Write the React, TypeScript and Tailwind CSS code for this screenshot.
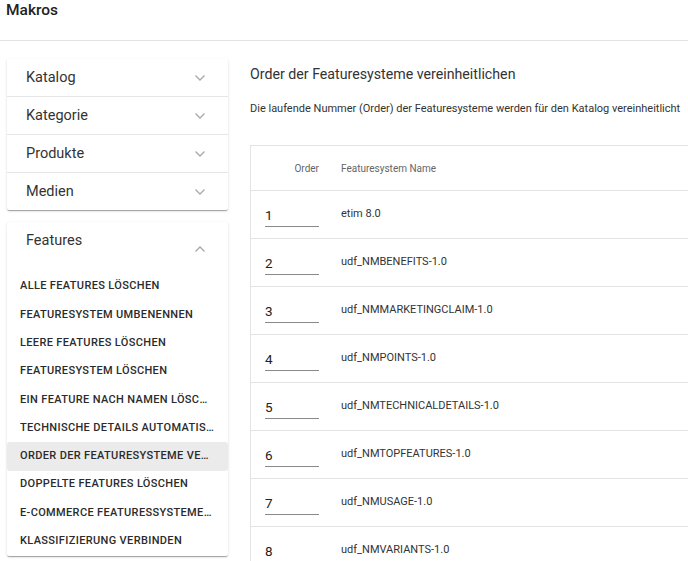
import React from "react";

const Chevron = ({ up = false }: { up?: boolean }) => (
  <svg width="12" height="8" viewBox="0 0 12 8" className="shrink-0">
    <polyline
      points={up ? "1.5,6.5 6,2 10.5,6.5" : "1.5,1.5 6,6 10.5,1.5"}
      fill="none"
      stroke="#a8a8a8"
      strokeWidth="1.3"
    />
  </svg>
);

const sections = ["Katalog", "Kategorie", "Produkte", "Medien"];
const items = [
  "ALLE FEATURES LÖSCHEN",
  "FEATURESYSTEM UMBENENNEN",
  "LEERE FEATURES LÖSCHEN",
  "FEATURESYSTEM LÖSCHEN",
  "EIN FEATURE NACH NAMEN LÖSCHEN",
  "TECHNISCHE DETAILS AUTOMATISCH ERSTELLEN",
  "ORDER DER FEATURESYSTEME VEREINHEITLICHEN",
  "DOPPELTE FEATURES LÖSCHEN",
  "E-COMMERCE FEATURESSYSTEME ERSTELLEN",
  "KLASSIFIZIERUNG VERBINDEN",
];
const rows = [
  "etim 8.0",
  "udf_NMBENEFITS-1.0",
  "udf_NMMARKETINGCLAIM-1.0",
  "udf_NMPOINTS-1.0",
  "udf_NMTECHNICALDETAILS-1.0",
  "udf_NMTOPFEATURES-1.0",
  "udf_NMUSAGE-1.0",
  "udf_NMVARIANTS-1.0",
];

const shadow =
  "shadow-[0_2px_1px_-1px_rgba(0,0,0,0.2),0_1px_1px_0_rgba(0,0,0,0.14),0_1px_3px_0_rgba(0,0,0,0.12)]";

export default function App() {
  return (
    <div
      className="w-[688px] h-[561px] overflow-hidden bg-white text-[#333]"
      style={{ fontFamily: "Roboto, 'Noto Sans', sans-serif" }}
    >
      <div className="h-[41px] border-b border-[#e3e3e3] px-[6px] pt-[1px]">
        <div className="text-[15.5px] font-medium leading-[18px] text-[#222]">Makros</div>
      </div>

      <div className="flex pl-[7px] gap-[22px]">
        {/* Left column */}
        <div className="w-[221px] shrink-0 pt-[18px] flex flex-col gap-[12px]">
          <div className={`bg-white rounded-[2px] ${shadow}`}>
            {sections.map((s, i) => (
              <div
                key={s}
                className={`flex items-center justify-between pl-[19px] pr-[22px] ${
                  i < 3 ? "h-[38px]" : "h-[37px]"
                } ${i < sections.length - 1 ? "border-b border-[#e6e6e6]" : ""}`}
              >
                <span className="text-[14.5px] leading-[18px]">{s}</span>
                <Chevron />
              </div>
            ))}
          </div>

          <div className={`bg-white rounded-[2px] ${shadow}`}>
            <div className="h-[50.5px] flex justify-between pl-[19px] pr-[22px]">
              <span className="text-[14.5px] leading-[18px] pt-[9.5px]">Features</span>
              <div className="pt-[22.5px]">
                <Chevron up />
              </div>
            </div>
            <div className="flex flex-col pb-[1px]">
              {items.map((it, i) => (
                <div
                  key={it}
                  className={`h-[28.3px] flex items-center pl-[13px] pr-[14px] rounded-[3px] ${
                    i === 6 ? "bg-[#ebebeb]" : ""
                  }`}
                >
                  <span className="truncate text-[11px] font-medium tracking-[0.35px] text-[#2b2b2b]">
                    {it}
                  </span>
                </div>
              ))}
            </div>
          </div>
        </div>

        {/* Right column */}
        <div className="flex-1 min-w-0">
          <div className="pt-[24px] text-[14.2px] leading-[18px] text-[#333] whitespace-nowrap">
            Order der Featuresysteme vereinheitlichen
          </div>
          <div className="pt-[18px] text-[11px] leading-[16px] text-[#333] whitespace-nowrap">
            Die laufende Nummer (Order) der Featuresysteme werden für den Katalog vereinheitlicht
          </div>
          <div className="mt-[28px] w-[480px] border-l border-t border-[#e3e3e3]">
            <div className="h-[45px] flex items-center border-b border-[#e3e3e3] pl-[15px]">
              <div className="w-[53px] text-right text-[10px] text-[#666]">Order</div>
              <div className="pl-[22px] text-[10px] text-[#666]">Featuresystem Name</div>
            </div>
            {rows.map((r, i) => (
              <div
                key={r}
                className="h-[48px] flex border-b border-[#e3e3e3] pl-[14px]"
              >
                <div className="w-[54px] pt-[15px]">
                  <div className="h-[21px] border-b border-[#8a8a8a] text-[13.5px] leading-[19px] text-[#222]">
                    {i + 1}
                  </div>
                </div>
                <div className="pl-[22px] pt-[16px] text-[11px] leading-[14px] text-[#333]">
                  {r}
                </div>
              </div>
            ))}
          </div>
        </div>
      </div>
    </div>
  );
}
